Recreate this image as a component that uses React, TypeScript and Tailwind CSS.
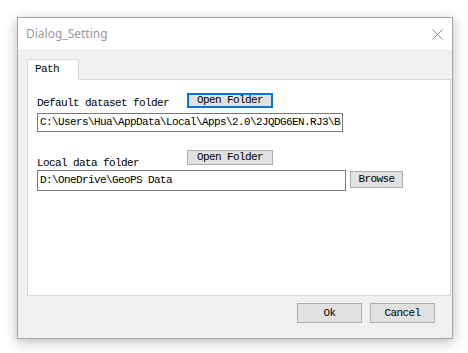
import React from "react";

const mono = { fontFamily: '"Liberation Mono", "DejaVu Sans Mono", monospace' };

export default function App() {
  return (
    <div className="w-[468px] h-[353px] bg-white pl-[17px] pt-[17px] overflow-hidden">
      <div className="w-[436px] h-[322px] border border-[#a6a6a6] bg-[#f0f0f0] shadow-[0_3px_12px_rgba(0,0,0,0.28)] flex flex-col">
        {/* Title bar */}
        <div className="h-[31px] bg-white flex items-center justify-between pl-[8px] pr-[9px] shrink-0">
          <span
            className="text-[12px] text-[#9a9a9a] leading-none pt-[1px]"
            style={{ fontFamily: '"Noto Sans", "Open Sans", sans-serif' }}
          >
            Dialog_Setting
          </span>
          <svg width="11" height="11" viewBox="0 0 11 11" className="mt-[1px]">
            <path d="M0.5 0.5 L10.5 10.5 M10.5 0.5 L0.5 10.5" stroke="#8a8a8a" strokeWidth="1" fill="none" />
          </svg>
        </div>

        {/* Body */}
        <div className="pl-[9px] pt-[10px] flex flex-col">
          {/* Tab */}
          <div className="flex">
            <div
              className="w-[52px] h-[21px] border border-b-0 border-[#d9d9d9] bg-white text-[11px] tracking-[-0.6px] text-black pl-[7px] pt-[3px] leading-[12px] relative -mb-[1px] z-10"
              style={mono}
            >
              Path
            </div>
          </div>
          {/* Panel */}
          <div className="w-[424px] h-[217px] border border-[#d9d9d9] bg-white pl-[9px] pt-[13px] text-[11px] tracking-[-0.6px] text-black" style={mono}>
            {/* Row 1 */}
            <div className="flex items-start">
              <div className="w-[150px] mt-[4px] leading-[12px] whitespace-nowrap">Default dataset folder</div>
              <div className="w-[86px] h-[15px] border-2 border-[#0078d7] bg-[#e1e1e1] flex items-center justify-center leading-none">
                Open Folder
              </div>
            </div>
            <div className="mt-[4px] w-[306px] h-[19px] border border-[#7a7a7a] pl-[2px] flex items-center overflow-hidden whitespace-nowrap leading-none">
              C:\Users\Hua\AppData\Local\Apps\2.0\2JQDG6EN.RJ3\B
            </div>
            {/* Row 2 */}
            <div className="mt-[18px] flex items-start">
              <div className="w-[150px] mt-[7px] leading-[12px] whitespace-nowrap">Local data folder</div>
              <div className="w-[86px] h-[15px] border border-[#adadad] bg-[#e1e1e1] flex items-center justify-center leading-none">
                Open Folder
              </div>
            </div>
            <div className="mt-[1px] flex items-start">
              <div className="w-[309px] h-[21px] border border-[#7a7a7a] pl-[2px] flex items-center overflow-hidden whitespace-nowrap leading-none">
                D:\OneDrive\GeoPS Data
              </div>
              <div className="ml-[4px] mt-[1px] w-[53px] h-[17px] border border-[#adadad] bg-[#e1e1e1] flex items-center justify-center leading-none">
                Browse
              </div>
            </div>
          </div>

          {/* Bottom buttons */}
          <div className="mt-[7px] flex justify-end gap-[8px] pr-[17px] text-[11px] tracking-[-0.6px] text-black" style={mono}>
            <div className="w-[65px] h-[20px] border border-[#adadad] bg-[#e1e1e1] flex items-center justify-center leading-none">
              Ok
            </div>
            <div className="w-[65px] h-[20px] border border-[#adadad] bg-[#e1e1e1] flex items-center justify-center leading-none">
              Cancel
            </div>
          </div>
        </div>
      </div>
    </div>
  );
}
